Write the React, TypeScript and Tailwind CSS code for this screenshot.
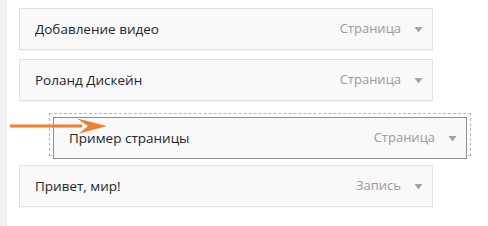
const ITEMS_TOP = [
  { title: "Добавление видео", type: "Страница" },
  { title: "Роланд Дискейн", type: "Страница" },
];

function Caret() {
  return (
    <svg width="9" height="7" viewBox="0 0 9 7" className="shrink-0">
      <path d="M0.5 1 L8.5 1 L4.5 6.5 Z" fill="#a0a5aa" />
    </svg>
  );
}

function MenuItem({
  title,
  type,
  dragging,
}: {
  title: string;
  type: string;
  dragging?: boolean;
}) {
  return (
    <div
      className={
        "flex h-[42px] w-[414px] items-center border bg-[#f9f9f9] pl-[15px] pr-[9px] " +
        (dragging
          ? "border-[#8c8f94]"
          : "border-[#e2e2e2] shadow-[0_1px_1px_rgba(0,0,0,0.04)]")
      }
    >
      <span className="flex-1 truncate text-[13.5px] font-normal text-[#23282d]">
        {title}
      </span>
      <span className="mr-[13px] text-[13px] text-[#9a9a9a]">{type}</span>
      <Caret />
    </div>
  );
}

export default function App() {
  return (
    <div
      className="relative flex h-[226px] w-[488px] overflow-hidden bg-white"
      style={{ fontFamily: '"Open Sans", "Noto Sans", sans-serif' }}
    >
      <div className="w-[7px] shrink-0 border-r border-[#ececec] bg-[#f3f3f3]" />
      <div className="flex flex-col pl-[12px] pt-[8px]">
        <div className="flex flex-col gap-[9px]">
          {ITEMS_TOP.map((item) => (
            <MenuItem key={item.title} title={item.title} type={item.type} />
          ))}
        </div>

        <div className="relative mt-[12px] ml-[30px] h-[43px] w-[422px] border border-dashed border-[#b4b9be]">
          <div className="absolute left-[3px] top-[3px]">
            <MenuItem title="Пример страницы" type="Страница" dragging />
          </div>
        </div>

        <div className="mt-[9px]">
          <MenuItem title="Привет, мир!" type="Запись" />
        </div>
      </div>

      <svg
        className="absolute left-[10px] top-[117px]"
        width="100"
        height="18"
        viewBox="0 0 100 18"
      >
        <rect x="0" y="7.5" width="72" height="3" fill="#f07f2d" />
        <path d="M67 1.5 L97 9 L69 16.5 L78 9 Z" fill="#f07f2d" />
      </svg>
    </div>
  );
}
